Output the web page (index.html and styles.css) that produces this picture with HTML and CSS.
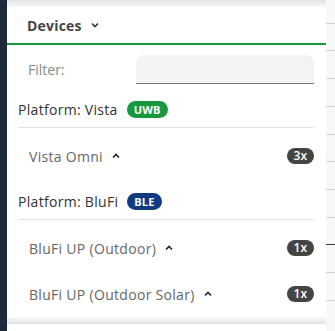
FILE: index.html
```html
<!DOCTYPE html>
<html lang="en">
<head>
    <meta charset="UTF-8">
    <meta name="viewport" content="width=device-width, initial-scale=1.0">
    <title>Devices</title>
    <link rel="stylesheet" href="styles.css">
</head>
<body>
    <div class="sidebar"></div>
    <div class="main">
        <div class="rows"></div>

        <div class="panel">
            <div class="panel-top"></div>
            <div class="panel-header">
                <span class="title">Devices</span>
                <svg class="chev" width="8" height="6" viewBox="0 0 8 6"><path d="M1 1.5 L4 4.5 L7 1.5" fill="none" stroke="#333" stroke-width="1.6"/></svg>
            </div>

            <div class="panel-body">
                <div class="filter">
                    <label for="filter">Filter:</label>
                    <input type="text" id="filter">
                </div>

                <div class="platform">
                    <span>Platform: Vista</span>
                    <span class="tag tag-uwb">UWB</span>
                </div>
                <div class="items">
                    <div class="item">
                        <span class="name">Vista Omni</span>
                        <svg class="chev" width="8" height="6" viewBox="0 0 8 6"><path d="M1 4.5 L4 1.5 L7 4.5" fill="none" stroke="#222" stroke-width="1.6"/></svg>
                        <span class="count">3x</span>
                    </div>
                </div>

                <div class="platform">
                    <span>Platform: BluFi</span>
                    <span class="tag tag-ble">BLE</span>
                </div>
                <div class="items">
                    <div class="item">
                        <span class="name">BluFi UP (Outdoor)</span>
                        <svg class="chev" width="8" height="6" viewBox="0 0 8 6"><path d="M1 4.5 L4 1.5 L7 4.5" fill="none" stroke="#222" stroke-width="1.6"/></svg>
                        <span class="count">1x</span>
                    </div>
                    <div class="item">
                        <span class="name">BluFi UP (Outdoor Solar)</span>
                        <svg class="chev" width="8" height="6" viewBox="0 0 8 6"><path d="M1 4.5 L4 1.5 L7 4.5" fill="none" stroke="#222" stroke-width="1.6"/></svg>
                        <span class="count">1x</span>
                    </div>
                </div>
            </div>
            <div class="panel-bottom"></div>
        </div>
    </div>
</body>
</html>
```

FILE: styles.css
```css
body {
    margin: 0;
    font-family: "Open Sans", Arial, sans-serif;
    background-color: #ffffff;
    display: flex;
    height: 331px;
    overflow: hidden;
}

.sidebar {
    width: 7px;
    background-color: #1c2a3b;
}

.main {
    flex: 1;
    position: relative;
}

/* table rows of the page behind the dropdown */
.rows {
    height: 100%;
    background-color: #f8f8f8;
    background-image:
        linear-gradient(to bottom, transparent 244px, #3a3a3a 244px, #3a3a3a 245px, transparent 245px),
        repeating-linear-gradient(to bottom, transparent 0, transparent 26.7px, #d2d2d2 26.7px, #d2d2d2 27.7px);
    background-position: 0 0, 0 -4px;
}

.panel {
    position: absolute;
    left: 0;
    top: 0;
    bottom: 0;
    width: 319px;
    background-color: #ffffff;
    display: flex;
    flex-direction: column;
}

.panel-top {
    height: 7px;
    background: linear-gradient(to bottom, #e2e2e2, #f9f9f9);
}

.panel-header {
    height: 36px;
    display: flex;
    align-items: center;
    gap: 9px;
    padding-left: 20px;
    border-bottom: 2px solid #159a3c;
}

.title {
    font-size: 14px;
    font-weight: bold;
    color: #444444;
    letter-spacing: 0.2px;
}

.panel-body {
    padding: 10px 12px 0 11px;
}

.filter {
    display: flex;
    align-items: center;
    height: 29px;
    margin-bottom: 8px;
}

.filter label {
    flex: 0 0 108px;
    padding-left: 10px;
    font-size: 14px;
    color: #8a8a8a;
}

.filter input {
    flex: 1;
    min-width: 0;
    height: 29px;
    box-sizing: border-box;
    border: none;
    border-bottom: 1px solid #7a7a7a;
    border-radius: 8px 8px 0 0;
    background-color: #f3f3f3;
}

.platform {
    height: 35px;
    display: flex;
    align-items: center;
    gap: 9px;
    font-size: 14px;
    color: #333333;
    letter-spacing: 0.3px;
    border-bottom: 1px solid #e3e3e3;
}

.tag {
    display: inline-block;
    height: 17px;
    line-height: 17px;
    padding: 0 7px;
    border-radius: 9px;
    color: #ffffff;
    font-size: 11px;
    font-weight: bold;
    letter-spacing: 0.2px;
}

.tag-uwb {
    background-color: #17993b;
}

.tag-ble {
    background-color: #0f3c80;
}

.items {
    margin: 5px 0;
}

.items:last-child {
    margin-bottom: 0;
}

.item {
    height: 46px;
    display: flex;
    align-items: center;
    gap: 9px;
    padding-left: 11px;
    font-size: 14px;
    color: #666666;
    letter-spacing: 0.3px;
}

.item .count {
    margin-left: auto;
    height: 16px;
    line-height: 16px;
    padding: 0 7px;
    border-radius: 8px;
    background-color: #444444;
    color: #ffffff;
    font-size: 12px;
    font-weight: 600;
    letter-spacing: 0;
}

.panel-bottom {
    height: 7px;
    background: linear-gradient(to bottom, #fbfbfb, #e2e2e2);
}
```
